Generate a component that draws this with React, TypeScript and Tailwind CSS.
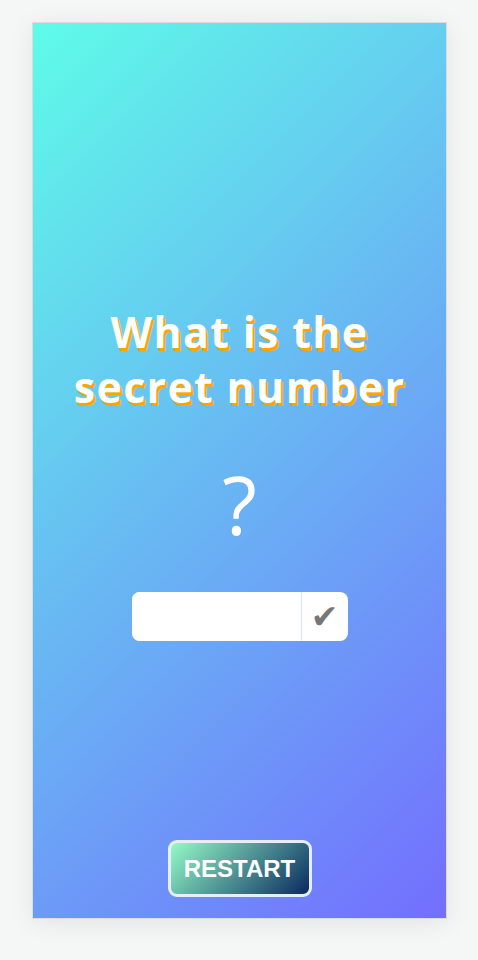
import React from "react";

export default function App() {
  return (
    <div className="min-h-[960px] w-full bg-[#f5f6f6] pt-[22px] px-[32px]">
      <div
        className="flex h-[897px] w-[415px] flex-col items-center border border-[#dcdcdc] bg-[linear-gradient(135deg,#5efce8,#736efe)] shadow-[0_4px_24px_rgba(0,0,0,0.08)]"
      >
        <h1
          className="mt-[281px] text-center text-[43px] font-bold leading-[55px] tracking-[1.3px] text-white [text-shadow:2px_3px_0_#f9a602]"
          style={{ fontFamily: '"Open Sans", "Noto Sans", sans-serif' }}
        >
          What is the
          <br />
          secret number
        </h1>
        <div
          className="mt-[50px] h-[80px] text-[80px] font-normal leading-[80px] text-white"
          style={{ fontFamily: '"Open Sans", sans-serif' }}
        >
          ?
        </div>
        <div className="mt-[48px] flex h-[49px] w-[216px] overflow-hidden rounded-[8px] bg-white">
          <input
            className="h-full w-[170px] border-r border-[#dfe7f1] bg-white px-2 outline-none"
            type="text"
          />
          <div
            className="flex flex-1 items-center justify-center text-[33px] leading-none text-[#777777]"
            style={{ fontFamily: '"DejaVu Sans", sans-serif' }}
          >
            ✔
          </div>
        </div>
        <button
          className="mt-auto mb-[21px] flex h-[57px] w-[144px] items-center justify-center rounded-[9px] border-[3px] border-[#e8eef8] bg-[linear-gradient(135deg,#93fbc7,#0a2a60)] text-[24px] font-bold text-white"
          style={{ fontFamily: '"Liberation Sans", Arial, sans-serif' }}
        >
          RESTART
        </button>
      </div>
    </div>
  );
}
